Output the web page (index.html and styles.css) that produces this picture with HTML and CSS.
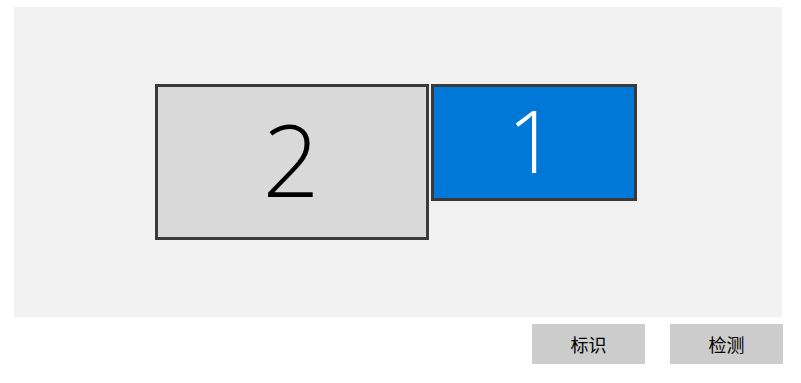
FILE: index.html
```html
<!DOCTYPE html>
<html lang="zh-CN">
<head>
<meta charset="utf-8">
<title>Display</title>
<link rel="stylesheet" href="styles.css">
</head>
<body>
<div class="wrap">
  <div class="canvas">
    <div class="monitor mon-2"><span class="num num-2">2</span></div>
    <div class="monitor mon-1"><span class="num num-1">1</span></div>
  </div>
  <div class="actions">
    <button class="btn">标识</button>
    <button class="btn">检测</button>
  </div>
</div>
</body>
</html>
```
FILE: styles.css
```css
html, body {
  margin: 0;
  padding: 0;
  background: #ffffff;
}
.wrap {
  padding: 7px 0 0 14px;
  width: 769px;
}
.canvas {
  position: relative;
  width: 768px;
  height: 310px;
  background: #f1f1f1;
}
.monitor {
  position: absolute;
  box-sizing: border-box;
  border: 3px solid #3a3a3a;
  display: flex;
  align-items: center;
  justify-content: center;
}
.mon-2 {
  left: 141px;
  top: 77px;
  width: 274px;
  height: 156px;
  background: #d9d9d9;
}
.mon-1 {
  left: 417px;
  top: 77px;
  width: 206px;
  height: 117px;
  background: #0078d7;
}
.num {
  font-family: "Open Sans", "Noto Sans", sans-serif;
  font-weight: 300;
  line-height: 1;
}
.num-2 {
  font-size: 100px;
  color: #000000;
  padding-bottom: 8px;
  margin-right: 2px;
}
.num-1 {
  font-size: 86px;
  color: #ffffff;
  padding-bottom: 6px;
  margin-right: 4px;
}
.actions {
  display: flex;
  justify-content: flex-end;
  gap: 25px;
  margin-top: 7px;
}
.btn {
  width: 113px;
  height: 40px;
  border: none;
  padding: 0;
  background: #cccccc;
  color: #000000;
  font-family: "Noto Sans CJK SC", "Microsoft YaHei", sans-serif;
  font-size: 18px;
  line-height: 40px;
}
```
